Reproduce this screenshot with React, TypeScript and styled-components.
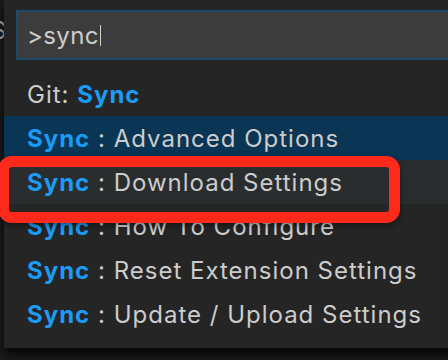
import styled, { createGlobalStyle } from "styled-components";

const GlobalStyle = createGlobalStyle`
  html, body {
    margin: 0;
    padding: 0;
    background: #1a1a1a;
    overflow: hidden;
  }
`;

type Item = { prefix?: string; match: string; sep?: string; label?: string };

const items: Item[] = [
  { prefix: "Git: ", match: "Sync" },
  { match: "Sync", sep: " : ", label: "Advanced Options" },
  { match: "Sync", sep: " : ", label: "Download Settings" },
  { match: "Sync", sep: " : ", label: "How To Configure" },
  { match: "Sync", sep: " : ", label: "Reset Extension Settings" },
  { match: "Sync", sep: " : ", label: "Update / Upload Settings" },
];

function App() {
  const selected = 1;
  const hovered = 2;

  return (
    <Screen>
      <GlobalStyle />
      <BehindText>S</BehindText>

      <Palette>
        <InputBox>
          <InputText>&gt;sync</InputText>
          <Caret />
        </InputBox>

        <List>
          {items.map((item, i) => (
            <Row
              key={i}
              $state={i === selected ? "selected" : i === hovered ? "hover" : "idle"}
            >
              {item.prefix}
              <Match>{item.match}</Match>
              {item.sep}
              {item.label}
            </Row>
          ))}
        </List>
      </Palette>

      <Callout />
    </Screen>
  );
}

const Screen = styled.div`
  position: relative;
  display: flex;
  width: 448px;
  height: 360px;
  overflow: hidden;
  background: #1b1b1b;
  font-family: Inter, "Noto Sans", sans-serif;
`;

const BehindText = styled.div`
  position: absolute;
  left: -9px;
  top: 16px;
  font-size: 24px;
  color: #bbbbbb;
`;

const Palette = styled.div`
  position: relative;
  flex: none;
  margin-left: 4px;
  width: 470px;
  height: 348px;
  padding-top: 10px;
  box-sizing: border-box;
  background: #252526;
  box-shadow: 0 6px 10px rgba(0, 0, 0, 0.85);
`;

const InputBox = styled.div`
  display: flex;
  align-items: center;
  height: 50px;
  margin-left: 12px;
  padding-left: 9px;
  box-sizing: border-box;
  background: #3c3c3c;
  border: 2px solid #1c4b6c;
  border-right: none;
`;

const InputText = styled.span`
  font-size: 24px;
  color: #cccccc;
  letter-spacing: 0.4px;
`;

const Caret = styled.span`
  width: 1.5px;
  height: 21px;
  margin-left: 1px;
  background: #d0d0d0;
`;

const List = styled.div`
  margin-top: 12px;
`;

const Row = styled.div<{ $state: "selected" | "hover" | "idle" }>`
  display: flex;
  align-items: center;
  height: 44px;
  padding-left: 23px;
  font-size: 24px;
  letter-spacing: 1px;
  color: #cccccc;
  white-space: pre;
  background: ${(p) =>
    p.$state === "selected" ? "#0a3554" : p.$state === "hover" ? "#2a2d2e" : "transparent"};
`;

const Match = styled.span`
  color: #1a9bf5;
  font-weight: 700;
`;

const Callout = styled.div`
  position: absolute;
  left: -2px;
  top: 156px;
  width: 402px;
  height: 67px;
  box-sizing: border-box;
  border: 11px solid #fd2a1c;
  border-radius: 14px;
  box-shadow: 0 2px 6px rgba(0, 0, 0, 0.45);
`;

export default App;
